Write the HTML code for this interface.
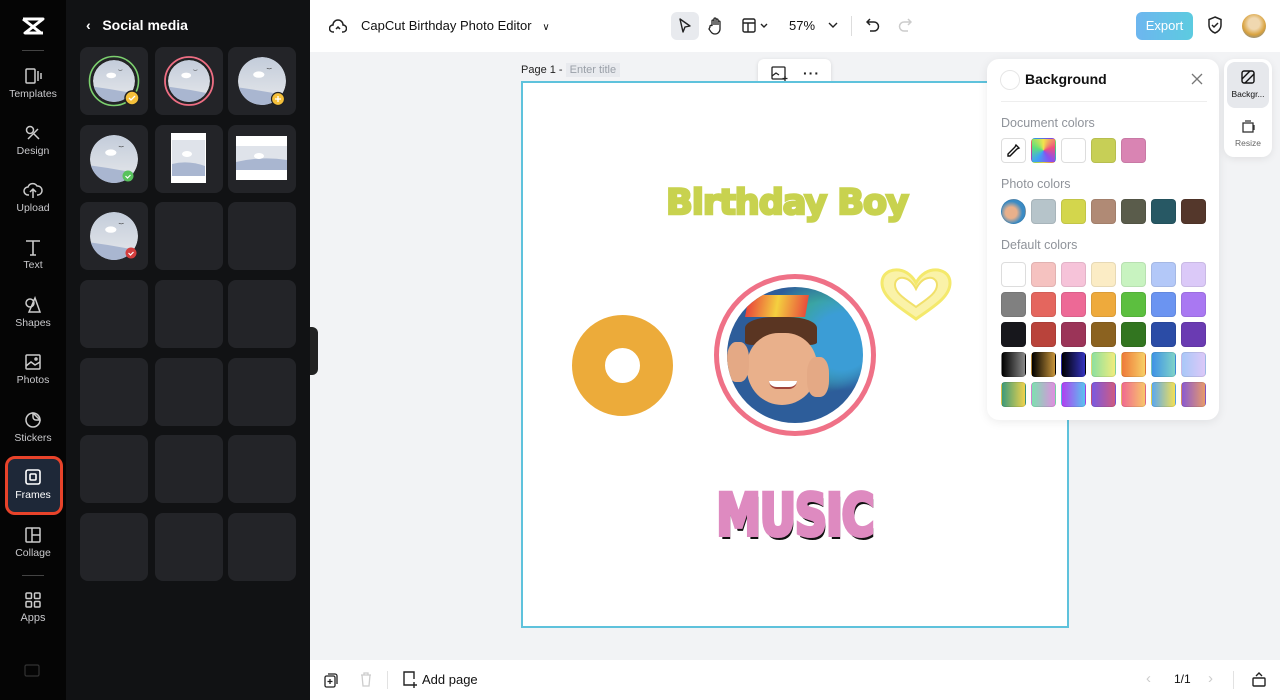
<!DOCTYPE html>
<html><head><meta charset="utf-8"><style>
*{box-sizing:border-box;margin:0;padding:0}
body{width:1280px;height:700px;overflow:hidden;font-family:"Liberation Sans",sans-serif;background:#f2f3f5;position:relative}
.abs{position:absolute}
.rail{left:0;top:0;width:66px;height:700px;background:#050505}
.ri{position:absolute;left:0;width:66px;text-align:center;color:#c9c9cc;font-size:10.5px}
.ri svg{display:block;margin:0 auto 3px}
.panel{left:66px;top:0;width:244px;height:700px;background:#111214}
.tile{position:absolute;width:68px;height:68px;background:#232428;border-radius:8px}
.top{left:310px;top:0;width:970px;height:52px;background:#fff}
.bot{left:310px;top:660px;width:970px;height:40px;background:#fff}
.page{left:521px;top:81px;width:548px;height:547px;background:#fff;border:2px solid #5ec2dc}
.bg{left:987px;top:59px;width:232px;height:361px;background:#fff;border-radius:12px;box-shadow:0 2px 10px rgba(0,0,0,.08)}
.sw{position:absolute;width:25px;height:25px;border-radius:4px;border:1px solid rgba(0,0,0,.08)}
.lbl{position:absolute;left:14px;font-size:12.5px;color:#8f939a}
</style></head><body>
<svg width="0" height="0" style="position:absolute"><defs>
<linearGradient id="sky" x1="0" y1="0" x2="0" y2="1"><stop offset="0" stop-color="#c3ccda"/><stop offset="1" stop-color="#e6e8eb"/></linearGradient>
<clipPath id="cc"><circle cx="30" cy="30" r="30"/></clipPath>
<symbol id="sc" viewBox="0 0 60 60"><g clip-path="url(#cc)"><circle cx="30" cy="30" r="30" fill="url(#sky)"/><path d="M0 38 Q30 42 60 48 L60 60 L0 60Z" fill="#a9b6d0"/><ellipse cx="26" cy="22" rx="7" ry="4" fill="#fff"/><path d="M36 14l3 1 3-1" stroke="#333" fill="none" stroke-width=".7"/></g></symbol>
</defs></svg>

<div class="abs rail">
 <svg class="abs" style="left:21px;top:16px" width="24" height="20" viewBox="0 0 24 20"><path d="M2 3h20L4 17h18M2 3l18 14" stroke="#fff" stroke-width="3" fill="none" stroke-linejoin="round"/></svg>
 <div class="abs" style="left:22px;top:50px;width:22px;height:1px;background:#444"></div>
 <div class="ri" style="top:67px"><svg width="18" height="18" viewBox="0 0 18 18" fill="none" stroke="#ccc" stroke-width="1.5"><rect x="2" y="2" width="9" height="14" rx="1"/><path d="M14 4v10M17 6v6"/></svg>Templates</div>
 <div class="ri" style="top:124px"><svg width="18" height="18" viewBox="0 0 18 18" fill="none" stroke="#ccc" stroke-width="1.5"><circle cx="6" cy="6" r="3.5"/><path d="M9 9l6 6M4 15l10-10"/></svg>Design</div>
 <div class="ri" style="top:181px"><svg width="20" height="18" viewBox="0 0 20 18" fill="none" stroke="#ccc" stroke-width="1.5"><path d="M6 14H5a4 4 0 010-8 5 5 0 019-1 4 4 0 011 9h-1M10 9v8M7 11l3-3 3 3"/></svg>Upload</div>
 <div class="ri" style="top:238px"><svg width="18" height="18" viewBox="0 0 18 18" fill="none" stroke="#ccc" stroke-width="1.6"><path d="M2 3h14M9 3v14M6 17h6"/></svg>Text</div>
 <div class="ri" style="top:296px"><svg width="18" height="18" viewBox="0 0 18 18" fill="none" stroke="#ccc" stroke-width="1.5"><circle cx="6" cy="7" r="4"/><path d="M11 2l5 14H5z"/></svg>Shapes</div>
 <div class="ri" style="top:353px"><svg width="18" height="18" viewBox="0 0 18 18" fill="none" stroke="#ccc" stroke-width="1.5"><rect x="2" y="2" width="14" height="14" rx="1"/><path d="M2 13l5-4 4 3 5-3"/><circle cx="12" cy="6" r="1"/></svg>Photos</div>
 <div class="ri" style="top:411px"><svg width="18" height="18" viewBox="0 0 18 18" fill="none" stroke="#ccc" stroke-width="1.5"><path d="M16 9A7 7 0 119 2l7 7z"/><path d="M9 2a7 7 0 017 7h-4a3 3 0 01-3-3z"/></svg>Stickers</div>
 <div class="abs" style="left:5px;top:456px;width:58px;height:59px;border:3px solid #e8432a;border-radius:10px;background:#1e2838"></div>
 <div class="ri" style="top:468px;color:#fff"><svg width="18" height="18" viewBox="0 0 18 18" fill="none" stroke="#fff" stroke-width="1.6"><rect x="2" y="2" width="14" height="14" rx="2"/><rect x="6" y="6" width="6" height="6" rx="1"/></svg>Frames</div>
 <div class="ri" style="top:526px"><svg width="18" height="18" viewBox="0 0 18 18" fill="none" stroke="#ccc" stroke-width="1.5"><rect x="2" y="2" width="14" height="14" rx="1"/><path d="M8 2v14M8 9h8"/></svg>Collage</div>
 <div class="abs" style="left:22px;top:575px;width:22px;height:1px;background:#444"></div>
 <div class="ri" style="top:591px;font-size:11px"><svg width="18" height="18" viewBox="0 0 18 18" fill="none" stroke="#ccc" stroke-width="1.5"><rect x="2" y="2" width="5.5" height="5.5" rx="1"/><rect x="10.5" y="2" width="5.5" height="5.5" rx="1"/><rect x="2" y="10.5" width="5.5" height="5.5" rx="1"/><rect x="10.5" y="10.5" width="5.5" height="5.5" rx="1"/></svg>Apps</div>
 <svg class="abs" style="left:24px;top:664px" width="16" height="13"><rect x="1" y="1" width="14" height="11" rx="1.5" fill="none" stroke="#333" stroke-width="1.2"/></svg>
</div>

<div class="abs panel">
 <div class="abs" style="left:20px;top:17px;color:#fff;font-size:14px;font-weight:bold">&lsaquo;&nbsp;&nbsp;&nbsp;Social media</div>
 <div class="tile" style="left:14px;top:47px"><svg class="abs" style="left:8px;top:8px" width="52" height="52"><circle cx="26" cy="26" r="24.5" fill="none" stroke="#7cd06e" stroke-width="1.6"/><circle cx="26" cy="26" r="22" fill="#222"/><use href="#sc" x="5" y="5" width="42" height="42"/><circle cx="44" cy="43" r="7" fill="#f5c03a" stroke="#222" stroke-width="1.5"/><path d="M41 43l2 2 4-4" stroke="#fff" stroke-width="1.3" fill="none"/></svg></div>
 <div class="tile" style="left:89px;top:47px"><svg class="abs" style="left:8px;top:8px" width="52" height="52"><circle cx="26" cy="26" r="24" fill="none" stroke="#ee6e83" stroke-width="1.8"/><circle cx="26" cy="26" r="22" fill="#222"/><use href="#sc" x="5" y="5" width="42" height="42"/></svg></div>
 <div class="tile" style="left:162px;top:47px"><svg class="abs" style="left:8px;top:8px" width="52" height="52"><use href="#sc" x="2" y="2" width="48" height="48"/><circle cx="42" cy="44" r="6.5" fill="#f5c03a" stroke="#222" stroke-width="1.2"/><path d="M42 41v6M39 44h6" stroke="#fff" stroke-width="1.3"/></svg></div>
 <div class="tile" style="left:14px;top:125px"><svg class="abs" style="left:8px;top:8px" width="52" height="52"><use href="#sc" x="2" y="2" width="48" height="48"/><circle cx="40" cy="43" r="5.5" fill="#58c25d"/><path d="M37.5 43l2 2 3-3" stroke="#fff" stroke-width="1.2" fill="none"/></svg></div>
 <div class="tile" style="left:89px;top:125px"><div class="abs" style="left:16px;top:8px;width:35px;height:50px;background:#fff"><svg class="abs" style="left:1px;top:7px" width="33" height="36" viewBox="0 0 33 36"><rect width="33" height="36" fill="#dfe3ea"/><path d="M0 24Q16 20 33 26V36H0z" fill="#a9b6d0"/><ellipse cx="15" cy="14" rx="5" ry="3" fill="#fff"/></svg></div></div>
 <div class="tile" style="left:162px;top:125px"><div class="abs" style="left:8px;top:11px;width:51px;height:44px;background:#fff"><svg class="abs" style="left:0;top:10px" width="51" height="24" viewBox="0 0 51 24"><rect width="51" height="24" fill="#dfe3ea"/><path d="M0 16Q25 10 51 14V24H0z" fill="#a9b6d0"/><ellipse cx="23" cy="10" rx="5" ry="3" fill="#fff"/></svg></div></div>
 <div class="tile" style="left:14px;top:202px"><svg class="abs" style="left:8px;top:8px" width="52" height="52"><use href="#sc" x="2" y="2" width="48" height="48"/><circle cx="43" cy="43" r="5.5" fill="#d33d3d"/><path d="M40.5 43l2 2 3-3" stroke="#fff" stroke-width="1.2" fill="none"/></svg></div>
 <div class="tile" style="left:89px;top:202px"></div><div class="tile" style="left:162px;top:202px"></div>
 <div class="tile" style="left:14px;top:280px"></div><div class="tile" style="left:89px;top:280px"></div><div class="tile" style="left:162px;top:280px"></div>
 <div class="tile" style="left:14px;top:358px"></div><div class="tile" style="left:89px;top:358px"></div><div class="tile" style="left:162px;top:358px"></div>
 <div class="tile" style="left:14px;top:435px"></div><div class="tile" style="left:89px;top:435px"></div><div class="tile" style="left:162px;top:435px"></div>
 <div class="tile" style="left:14px;top:513px"></div><div class="tile" style="left:89px;top:513px"></div><div class="tile" style="left:162px;top:513px"></div>
</div>
<div class="abs" style="left:310px;top:327px;width:8px;height:48px;background:#222;border-radius:0 6px 6px 0"></div>

<div class="abs top">
 <svg class="abs" style="left:19px;top:17px" width="18" height="17" viewBox="0 0 18 17" fill="none" stroke="#222" stroke-width="1.5"><path d="M5 15H4a3.5 3.5 0 010-7 5 5 0 0110 0 3.5 3.5 0 010 7h-1M7 12l2-2 2 2"/></svg>
 <div class="abs" style="left:51px;top:18px;font-size:13px;color:#111">CapCut Birthday Photo Editor&nbsp;&nbsp;&nbsp;<span style="font-size:10px">&#8744;</span></div>
 <div class="abs" style="left:361px;top:12px;width:28px;height:28px;background:#e8eaee;border-radius:6px"></div>
 <svg class="abs" style="left:368px;top:18px" width="14" height="16"><path d="M2 1l10 7-5 1-2 5z" fill="none" stroke="#222" stroke-width="1.4" stroke-linejoin="round"/></svg>
 <svg class="abs" style="left:398px;top:17px" width="16" height="18" viewBox="0 0 16 18" fill="none" stroke="#222" stroke-width="1.3"><path d="M4 9V4a1 1 0 012 0v4V2a1 1 0 012 0v6V3a1 1 0 012 0v5V5a1 1 0 012 0v7a5 5 0 01-5 5c-3 0-4-2-6-5L2 10a1 1 0 012-1z"/></svg>
 <svg class="abs" style="left:432px;top:18px" width="26" height="16" fill="none" stroke="#222" stroke-width="1.4"><rect x="1" y="1" width="12" height="13" rx="1.5"/><path d="M1 5h12M6 5v9M19 6l3 3 3-3"/></svg>
 <div class="abs" style="left:479px;top:18px;font-size:13px;color:#111">57%</div>
 <svg class="abs" style="left:518px;top:21px" width="10" height="8"><path d="M1 2l4 4 4-4" fill="none" stroke="#222" stroke-width="1.4"/></svg>
 <div class="abs" style="left:541px;top:16px;width:1px;height:20px;background:#ddd"></div>
 <svg class="abs" style="left:556px;top:18px" width="14" height="15" fill="none" stroke="#222" stroke-width="1.5"><path d="M4 1L1 4l3 3M1 4h7a4.5 4.5 0 010 9H4"/></svg>
 <svg class="abs" style="left:588px;top:18px" width="14" height="15" fill="none" stroke="#ccc" stroke-width="1.5"><path d="M10 1l3 3-3 3M13 4H6a4.5 4.5 0 000 9h4"/></svg>
 <div class="abs" style="left:826px;top:12px;width:57px;height:28px;border-radius:6px;background:linear-gradient(90deg,#6db6ef,#5ccbe0);color:#fff;font-size:13px;text-align:center;line-height:28px">Export</div>
 <svg class="abs" style="left:897px;top:16px" width="16" height="19" fill="none" stroke="#222" stroke-width="1.5"><path d="M8 1l6 2.5V9c0 4-3 7-6 8-3-1-6-4-6-8V3.5z"/><path d="M5 9l2 2 4-4"/></svg>
 <div class="abs" style="left:932px;top:14px;width:24px;height:24px;border-radius:50%;background:radial-gradient(circle at 50% 40%,#f0d8b0 30%,#d9a23e 60%,#4a7bbd)"></div>
</div>
<div class="abs" style="left:521px;top:64px;font-size:11px;color:#222">Page 1 - <span style="background:#e8eaee;color:#9aa0a8;padding:1px 4px">Enter title</span></div>
<div class="abs" style="left:758px;top:59px;width:73px;height:30px;background:#fff;border-radius:6px;box-shadow:0 1px 4px rgba(0,0,0,.12)"></div>
<svg class="abs" style="left:771px;top:66px" width="17" height="16" fill="none" stroke="#222" stroke-width="1.3"><rect x="1" y="1" width="13" height="12" rx="1"/><path d="M1 10l4-3 3 2M14 10v5M11.5 12.5h5"/></svg>
<div class="abs" style="left:803px;top:65px;font-size:14px;font-weight:bold;color:#222;letter-spacing:1px">···</div>

<div class="abs page">
 <div class="abs" style="left:0;top:100px;width:528px;text-align:center;font-size:35px;font-weight:900;color:#c8d24f;font-family:'DejaVu Sans','Liberation Sans',sans-serif;letter-spacing:-1px;-webkit-text-stroke:2.5px #c8d24f">Birthday Boy</div>
 <div class="abs" style="left:49px;top:232px;width:101px;height:101px;border-radius:50%;border:33px solid #ecab3a"></div>
 <div class="abs" style="left:191px;top:191px;width:162px;height:162px;border-radius:50%;border:5px solid #ef7187;background:#fff"></div>
 <div class="abs" style="left:204px;top:204px;width:136px;height:136px;border-radius:50%;overflow:hidden;background:radial-gradient(circle at 85% 40%,#3b9dd6 20%,transparent 35%),radial-gradient(circle at 70% 35%,#3aa5a0 25%,transparent 45%),#2d5d9a">
  <div class="abs" style="left:20px;top:8px;width:60px;height:22px;background:linear-gradient(90deg,#e9453a,#f4d03f,#e84e3c);transform:skewX(-10deg)"></div>
  <div class="abs" style="left:18px;top:30px;width:72px;height:28px;border-radius:40% 40% 10% 10%;background:#5a3522"></div>
  <div class="abs" style="left:20px;top:46px;width:70px;height:72px;border-radius:45% 45% 50% 50%;background:#e9b08b"></div>
  <div class="abs" style="left:0;top:55px;width:22px;height:40px;border-radius:40%;background:#e4a985"></div>
  <div class="abs" style="left:80px;top:70px;width:22px;height:40px;border-radius:40%;background:#e4a985"></div>
  <div class="abs" style="left:42px;top:94px;width:28px;height:8px;border-radius:0 0 14px 14px;background:#fff;border-bottom:2px solid #a0453a"></div>
 </div>
 <svg class="abs" style="left:356px;top:184px" width="74" height="56" viewBox="0 0 74 56"><path d="M37 52C20 40 3 30 3 16 3 6 12 2 20 3c8 1 14 7 17 13 3-6 9-12 17-13 8-1 17 3 17 13 0 14-17 24-34 36z" fill="#faf2a8" stroke="#f4e96c" stroke-width="3"/><path d="M37 40C26 32 16 26 16 18c0-5 4-8 9-7 5 1 9 5 12 11 3-6 7-10 12-11 5-1 9 2 9 7 0 8-10 14-21 22z" fill="#fff" stroke="#f1e06a" stroke-width="2"/></svg>
 <div class="abs" style="left:0;top:398px;width:544px;text-align:center;font-size:58px;font-weight:bold;color:#de8ac0;font-family:'DejaVu Sans Condensed','DejaVu Sans',sans-serif;letter-spacing:-1px;-webkit-text-stroke:4px #de8ac0;text-shadow:2px 4px 0 #111,-1px -1px 0 #222;transform:scaleX(.85)">MUSIC</div>
</div>

<div class="abs bg">
 <div class="abs" style="left:13px;top:11px;width:20px;height:20px;border-radius:50%;border:1px solid #e6e6e6"></div>
 <div class="abs" style="left:38px;top:12px;font-size:14px;font-weight:bold;color:#111">Background</div>
 <svg class="abs" style="left:204px;top:14px" width="12" height="12"><path d="M1 1l10 10M11 1L1 11" stroke="#777" stroke-width="1.3"/></svg>
 <div class="abs" style="left:14px;top:42px;width:206px;height:1px;background:#eee"></div>
 <div class="lbl" style="top:57px">Document colors</div>
 <div class="sw" style="left:14px;top:79px;border-color:#ddd"></div>
 <svg class="abs" style="left:19px;top:84px" width="15" height="15" fill="none" stroke="#111" stroke-width="1.4"><path d="M10 2l3 3-2 1-7 7H2v-2l7-7z"/></svg>
 <div class="sw" style="left:44px;top:79px;background:conic-gradient(#f2e44c,#f04f7d,#8a4ff0,#3fa2f5,#5fe07a,#f2e44c)"></div>
 <div class="sw" style="left:74px;top:79px;background:#fff;border-color:#ddd"></div>
 <div class="sw" style="left:104px;top:79px;background:#c7cf56"></div>
 <div class="sw" style="left:134px;top:79px;background:#d984b3"></div>
 <div class="lbl" style="top:118px">Photo colors</div>
 <div class="sw" style="left:14px;top:140px;border-radius:50%;background:radial-gradient(circle at 40% 55%,#e9b08b 30%,#3b8bc4 60%)"></div>
 <div class="sw" style="left:44px;top:140px;background:#b6c4ca"></div>
 <div class="sw" style="left:74px;top:140px;background:#d3d64c"></div>
 <div class="sw" style="left:104px;top:140px;background:#b08a75"></div>
 <div class="sw" style="left:134px;top:140px;background:#5a5c4b"></div>
 <div class="sw" style="left:164px;top:140px;background:#275864"></div>
 <div class="sw" style="left:194px;top:140px;background:#54372b"></div>
 <div class="lbl" style="top:179px">Default colors</div>
 <div class="sw" style="left:14px;top:203px;background:#fff;border-color:#ddd"></div>
 <div class="sw" style="left:44px;top:203px;background:#f5c2c0"></div>
 <div class="sw" style="left:74px;top:203px;background:#f6c3d9"></div>
 <div class="sw" style="left:104px;top:203px;background:#fbecc5"></div>
 <div class="sw" style="left:134px;top:203px;background:#c8f3c0"></div>
 <div class="sw" style="left:164px;top:203px;background:#b3c8f8"></div>
 <div class="sw" style="left:194px;top:203px;background:#dbc9f8"></div>
 <div class="sw" style="left:14px;top:233px;background:#808080"></div>
 <div class="sw" style="left:44px;top:233px;background:#e4665e"></div>
 <div class="sw" style="left:74px;top:233px;background:#ed6996"></div>
 <div class="sw" style="left:104px;top:233px;background:#eeaa3c"></div>
 <div class="sw" style="left:134px;top:233px;background:#5cbf3f"></div>
 <div class="sw" style="left:164px;top:233px;background:#6b94f1"></div>
 <div class="sw" style="left:194px;top:233px;background:#a978f2"></div>
 <div class="sw" style="left:14px;top:263px;background:#17171c"></div>
 <div class="sw" style="left:44px;top:263px;background:#b9433b"></div>
 <div class="sw" style="left:74px;top:263px;background:#9b3458"></div>
 <div class="sw" style="left:104px;top:263px;background:#8b6220"></div>
 <div class="sw" style="left:134px;top:263px;background:#327520"></div>
 <div class="sw" style="left:164px;top:263px;background:#2b4ca6"></div>
 <div class="sw" style="left:194px;top:263px;background:#6a3bb2"></div>
 <div class="sw" style="left:14px;top:293px;background:linear-gradient(90deg,#000,#888)"></div>
 <div class="sw" style="left:44px;top:293px;background:linear-gradient(90deg,#000,#c8953a)"></div>
 <div class="sw" style="left:74px;top:293px;background:linear-gradient(90deg,#000,#3433c0)"></div>
 <div class="sw" style="left:104px;top:293px;background:linear-gradient(90deg,#8de0a0,#f1ec7c)"></div>
 <div class="sw" style="left:134px;top:293px;background:linear-gradient(90deg,#ee7a3a,#f7d066)"></div>
 <div class="sw" style="left:164px;top:293px;background:linear-gradient(90deg,#3f92e6,#7fd3c8)"></div>
 <div class="sw" style="left:194px;top:293px;background:linear-gradient(90deg,#a9c8f8,#dcc8f8)"></div>
 <div class="sw" style="left:14px;top:323px;background:linear-gradient(90deg,#3d9a7a,#f0d34c)"></div>
 <div class="sw" style="left:44px;top:323px;background:linear-gradient(90deg,#7ee0b0,#df8ee0)"></div>
 <div class="sw" style="left:74px;top:323px;background:linear-gradient(90deg,#b03ff0,#5ac3f0)"></div>
 <div class="sw" style="left:104px;top:323px;background:linear-gradient(90deg,#7a5ae0,#d05a80)"></div>
 <div class="sw" style="left:134px;top:323px;background:linear-gradient(90deg,#f06a90,#f8c66a)"></div>
 <div class="sw" style="left:164px;top:323px;background:linear-gradient(90deg,#5aa8f0,#f3e055)"></div>
 <div class="sw" style="left:194px;top:323px;background:linear-gradient(90deg,#8a5ad0,#e89a6a)"></div>
</div>

<div class="abs" style="left:1224px;top:59px;width:48px;height:98px;background:#fff;border-radius:10px;box-shadow:0 2px 8px rgba(0,0,0,.08)">
 <div class="abs" style="left:3px;top:3px;width:42px;height:46px;background:#e6e8ec;border-radius:8px"></div>
 <svg class="abs" style="left:17px;top:11px" width="14" height="14" fill="none" stroke="#111" stroke-width="1.4"><rect x="1" y="1" width="12" height="12" rx="2"/><path d="M1 9l8-8M4 13l9-9"/></svg>
 <div class="abs" style="left:0;top:30px;width:48px;text-align:center;font-size:8.5px;color:#111">Backgr...</div>
 <svg class="abs" style="left:17px;top:61px" width="14" height="14" fill="none" stroke="#333" stroke-width="1.3"><rect x="2" y="3" width="10" height="9"/><path d="M4 1h6M13 5v5"/></svg>
 <div class="abs" style="left:0;top:79px;width:48px;text-align:center;font-size:8.5px;color:#666">Resize</div>
</div>

<div class="abs bot">
 <svg class="abs" style="left:14px;top:12px" width="14" height="16" fill="none" stroke="#222" stroke-width="1.3"><rect x="1" y="4" width="10" height="11" rx="1.5"/><path d="M4 2h7a2 2 0 012 2v8M6 7v5M3.5 9.5h5"/></svg>
 <svg class="abs" style="left:50px;top:12px" width="12" height="15" fill="none" stroke="#ccc" stroke-width="1.3"><path d="M1 3h10M4 3V1h4v2M2 3l1 11h6l1-11"/></svg>
 <div class="abs" style="left:77px;top:11px;width:1px;height:18px;background:#e2e2e2"></div>
 <svg class="abs" style="left:92px;top:11px" width="16" height="17" fill="none" stroke="#222" stroke-width="1.4"><path d="M10 14H2V1h10v7M12 11v6M9 14h6"/></svg>
 <div class="abs" style="left:112px;top:12px;font-size:13px;color:#111">Add page</div>
 <div class="abs" style="left:836px;top:10px;font-size:15px;color:#ccc">&lsaquo;</div>
 <div class="abs" style="left:864px;top:12px;font-size:12px;color:#111">1/1</div>
 <div class="abs" style="left:898px;top:10px;font-size:15px;color:#ccc">&rsaquo;</div>
 <div class="abs" style="left:923px;top:11px;width:1px;height:18px;background:#e2e2e2"></div>
 <svg class="abs" style="left:942px;top:11px" width="14" height="16" fill="none" stroke="#222" stroke-width="1.4"><rect x="1" y="7" width="12" height="8" rx="1"/><path d="M4 5l3-3 3 3"/></svg>
</div>
</body></html>
